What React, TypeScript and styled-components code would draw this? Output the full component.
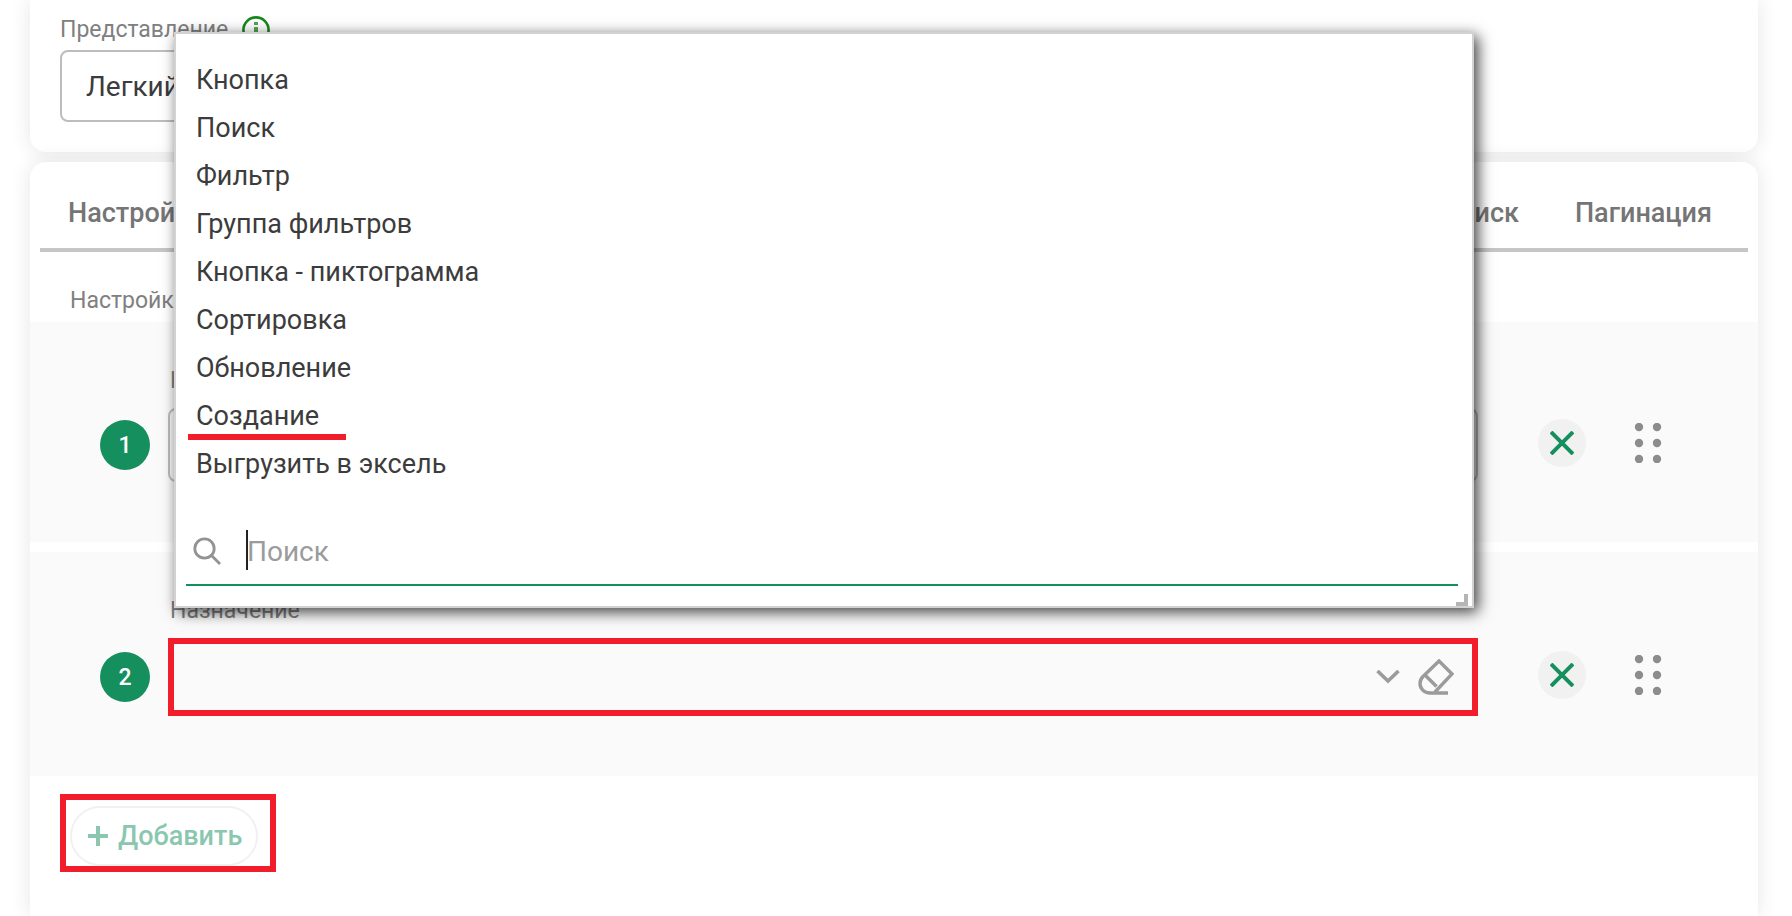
import React, { useId } from 'react';
import styled, { createGlobalStyle } from 'styled-components';

const GREEN = '#168f5f';
const RED = '#f21d2b';
const GREY = '#9b9b9b';

const GlobalStyle = createGlobalStyle`
  * { box-sizing: border-box; }
  html, body { margin: 0; background: #fff; }
  body { overflow: hidden; }
  body, button, input, select { font-family: Roboto, "Noto Sans", sans-serif; }
`;

const Page = styled.main`
  display: flex;
  flex-direction: column;
  gap: 10px;
  height: 100vh;
  padding: 0 34px 0 30px;
`;

const Card = styled.section<{ $last?: boolean }>`
  flex: ${p => (p.$last ? '1 0 auto' : 'none')};
  background: #fff;
  border-radius: ${p => (p.$last ? '16px 16px 0 0' : '0 0 16px 16px')};
  box-shadow: 0 0 20px rgba(40, 48, 58, 0.12);
`;

const ViewSection = styled.div`
  padding: 14px 30px 30px;
`;

const LabelLine = styled.div`
  display: flex;
  align-items: center;
  gap: 14px;
  height: 32px;
  margin-bottom: 4px;
`;

const Label = styled.label`
  font-size: 23px;
  line-height: 30px;
  color: #808080;
`;

const TextField = styled.input`
  display: block;
  width: 50%;
  height: 72px;
  padding: 0 24px;
  border: 2px solid #bdbdbd;
  border-radius: 8px;
  background: transparent;
  font-size: 28px;
  color: #3c3c3c;
`;

const Tabs = styled.nav`
  display: flex;
  height: 90px;
  margin: 0 10px;
  padding: 16px 8px 0 0;
  border-bottom: 4px solid #c6c6c6;
`;

const Tab = styled.button<{ $push?: boolean }>`
  margin-left: ${p => (p.$push ? 'auto' : '0')};
  padding: 0 28px;
  border: 0;
  background: none;
  font-size: 27px;
  font-weight: 500;
  color: #757575;
`;

const Caption = styled.p`
  margin: 0;
  padding: 34px 40px 6px;
  font-size: 23px;
  line-height: 30px;
  color: #808080;
`;

const Rows = styled.ol`
  display: flex;
  flex-direction: column;
  gap: 10px;
  margin: 0;
  padding: 0;
  list-style: none;
`;

const Row = styled.li`
  display: grid;
  grid-template-columns: 50px 1fr auto;
  grid-template-rows: 30px auto;
  column-gap: 18px;
  row-gap: 12px;
  align-items: center;
  padding: 44px 96px 60px 70px;
  background: #fafafa;
`;

const RowLabel = styled(Label)`
  grid-column: 2;
  padding-left: 2px;
`;

const Badge = styled.span`
  grid-column: 1;
  display: flex;
  align-items: center;
  justify-content: center;
  height: 50px;
  border-radius: 50%;
  background: ${GREEN};
  font-size: 23px;
  font-weight: 500;
  color: #fff;
`;

const Control = styled.div<{ $marked?: boolean }>`
  position: relative;
  display: flex;
  align-items: center;
  gap: 18px;
  height: ${p => (p.$marked ? 78 : 74)}px;
  padding-right: 18px;
  border: ${p => (p.$marked ? `6px solid ${RED}` : '2px solid #bdbdbd')};
  border-radius: ${p => (p.$marked ? 0 : 8)}px;
`;

const Select = styled.select`
  flex: 1;
  height: 100%;
  border: 0;
  appearance: none;
  background: transparent;
  font-size: 28px;
`;

const IconButton = styled.button`
  display: flex;
  padding: 0;
  border: 0;
  background: none;
`;

const RowActions = styled.div`
  display: flex;
  align-items: center;
  gap: 48px;
  padding: 0 0 4px 42px;
`;

const RemoveButton = styled(IconButton)`
  align-items: center;
  justify-content: center;
  width: 48px;
  height: 48px;
  border-radius: 50%;
  background: #f1f1f1;
`;

const Popup = styled.div`
  position: absolute;
  z-index: 2;
  left: 0;
  right: -2px;
  bottom: calc(100% + 36px);
  padding: 22px 10px 20px;
  border: 2px solid #d2d2d2;
  background: #fff;
  box-shadow: 4px 4px 14px rgba(0, 0, 0, 0.75);
`;

const Options = styled.ul`
  margin: 0 0 30px;
  padding: 0;
  list-style: none;
`;

const Option = styled.li`
  position: relative;
  height: 48px;
`;

const OptionButton = styled.button`
  width: 100%;
  padding: 0 10px;
  border: 0;
  background: none;
  font-size: 27px;
  line-height: 48px;
  text-align: left;
  color: #3c3c3c;
`;

const Underline = styled.span`
  position: absolute;
  left: 2px;
  bottom: 0;
  width: 158px;
  height: 6px;
  background: ${RED};
`;

const SearchBar = styled.div`
  position: relative;
  display: flex;
  align-items: center;
  gap: 26px;
  height: 68px;
  margin-right: 4px;
  padding-left: 7px;
  border-bottom: 2px solid ${GREEN};
`;

const SearchInput = styled.input`
  flex: 1;
  padding: 0;
  border: 0;
  outline: 0;
  background: none;
  font-size: 28px;
  color: #333;
  &::placeholder { color: ${GREY}; opacity: 1; }
`;

const Caret = styled.span`
  position: absolute;
  left: 60px;
  top: 12px;
  width: 2px;
  height: 40px;
  background: #222;
`;

const Resizer = styled.span`
  position: absolute;
  right: 4px;
  bottom: 0;
  width: 12px;
  height: 12px;
  border: solid #b5b5b5;
  border-width: 0 4px 4px 0;
`;

const Footer = styled.div`
  display: flex;
  padding: 18px 30px;
`;

const Mark = styled.div`
  display: flex;
  padding: 6px 12px 0 4px;
  height: 78px;
  border: 6px solid ${RED};
`;

const AddButton = styled.button`
  display: flex;
  align-items: center;
  gap: 10px;
  height: 60px;
  padding: 0 14px 0 16px;
  border: 2px solid #f1f1f1;
  border-radius: 30px;
  background: #fff;
  font-size: 27px;
  font-weight: 500;
  color: #8bc7af;
`;

const InfoIcon = () => (
  <svg width="28" height="28" viewBox="0 0 28 28" fill="none" stroke="#16881a" strokeWidth="2.6">
    <circle cx="14" cy="14" r="12.6" />
    <path d="M14 11v10M14 6v3" strokeWidth="4" strokeOpacity="0.75" />
  </svg>
);

const ChevronIcon = () => (
  <svg width="24" height="14" viewBox="0 0 24 14" fill="none" stroke={GREY} strokeWidth="3.6">
    <path d="M1.5 1 12 11 22.5 1" />
  </svg>
);

const EraserIcon = () => (
  <svg width="36" height="36" viewBox="0 0 36 36" fill="none" stroke={GREY} strokeWidth="3.4">
    <path d="M30 34H12C6 34 2 29.500 2 24.500q0-4 3-7L21 2 34 15 17 33M7 16l11.500 11.500" />
  </svg>
);

const CrossIcon = () => (
  <svg width="24" height="24" viewBox="0 0 24 24" fill="none" stroke={GREEN} strokeWidth="4">
    <path d="M1 1 23 23M23 1 1 23" />
  </svg>
);

const GripIcon = () => (
  <svg width="28" height="40" viewBox="0 0 28 40" fill="#8c8c8c">
    {[4, 20, 36].map(y => (
      <React.Fragment key={y}>
        <circle cx="5" cy={y} r="4.2" />
        <circle cx="23" cy={y} r="4.2" />
      </React.Fragment>
    ))}
  </svg>
);

const SearchIcon = () => (
  <svg width="28" height="28" viewBox="0 0 28 28" fill="none" stroke="#939393" strokeWidth="2.8">
    <circle cx="11.500" cy="11.500" r="9.700" />
    <path d="M18.500 18.500 27 27" />
  </svg>
);

const PlusIcon = () => (
  <svg width="20" height="20" viewBox="0 0 20 20" fill="none" stroke="#8bc7af" strokeWidth="4">
    <path d="M10 0v20M0 10h20" />
  </svg>
);

const OPTIONS = [
  'Кнопка',
  'Поиск',
  'Фильтр',
  'Группа фильтров',
  'Кнопка - пиктограмма',
  'Сортировка',
  'Обновление',
  'Создание',
  'Выгрузить в эксель',
];

const OptionsPopup = () => (
  <Popup>
    <Options>
      {OPTIONS.map(name => (
        <Option key={name}>
          <OptionButton type="button">{name}</OptionButton>
          {name === 'Создание' && <Underline />}
        </Option>
      ))}
    </Options>
    <SearchBar>
      <SearchIcon />
      <SearchInput type="text" placeholder="Поиск" aria-label="Поиск" />
      <Caret />
    </SearchBar>
    <Resizer />
  </Popup>
);

const SettingRow = ({ number, open }: { number: number; open?: boolean }) => {
  const id = useId();
  return (
    <Row>
      <RowLabel htmlFor={id}>Назначение</RowLabel>
      <Badge>{number}</Badge>
      <Control $marked={open}>
        <Select id={id} />
        {open && (
          <>
            <ChevronIcon />
            <IconButton type="button" aria-label="Очистить"><EraserIcon /></IconButton>
            <OptionsPopup />
          </>
        )}
      </Control>
      <RowActions>
        <RemoveButton type="button" aria-label="Удалить"><CrossIcon /></RemoveButton>
        <IconButton type="button" aria-label="Переместить"><GripIcon /></IconButton>
      </RowActions>
    </Row>
  );
};

export default function App() {
  return (
    <>
      <GlobalStyle />
      <Page>
        <Card>
          <ViewSection>
            <LabelLine>
              <Label htmlFor="view">Представление</Label>
              <InfoIcon />
            </LabelLine>
            <TextField id="view" type="text" defaultValue="Легкий" />
          </ViewSection>
        </Card>
        <Card $last>
          <Tabs>
            <Tab type="button">Настройка</Tab>
            <Tab type="button" $push>Поиск</Tab>
            <Tab type="button">Пагинация</Tab>
          </Tabs>
          <Caption>Настройка</Caption>
          <Rows>
            <SettingRow number={1} />
            <SettingRow number={2} open />
          </Rows>
          <Footer>
            <Mark>
              <AddButton type="button"><PlusIcon />Добавить</AddButton>
            </Mark>
          </Footer>
        </Card>
      </Page>
    </>
  );
}
